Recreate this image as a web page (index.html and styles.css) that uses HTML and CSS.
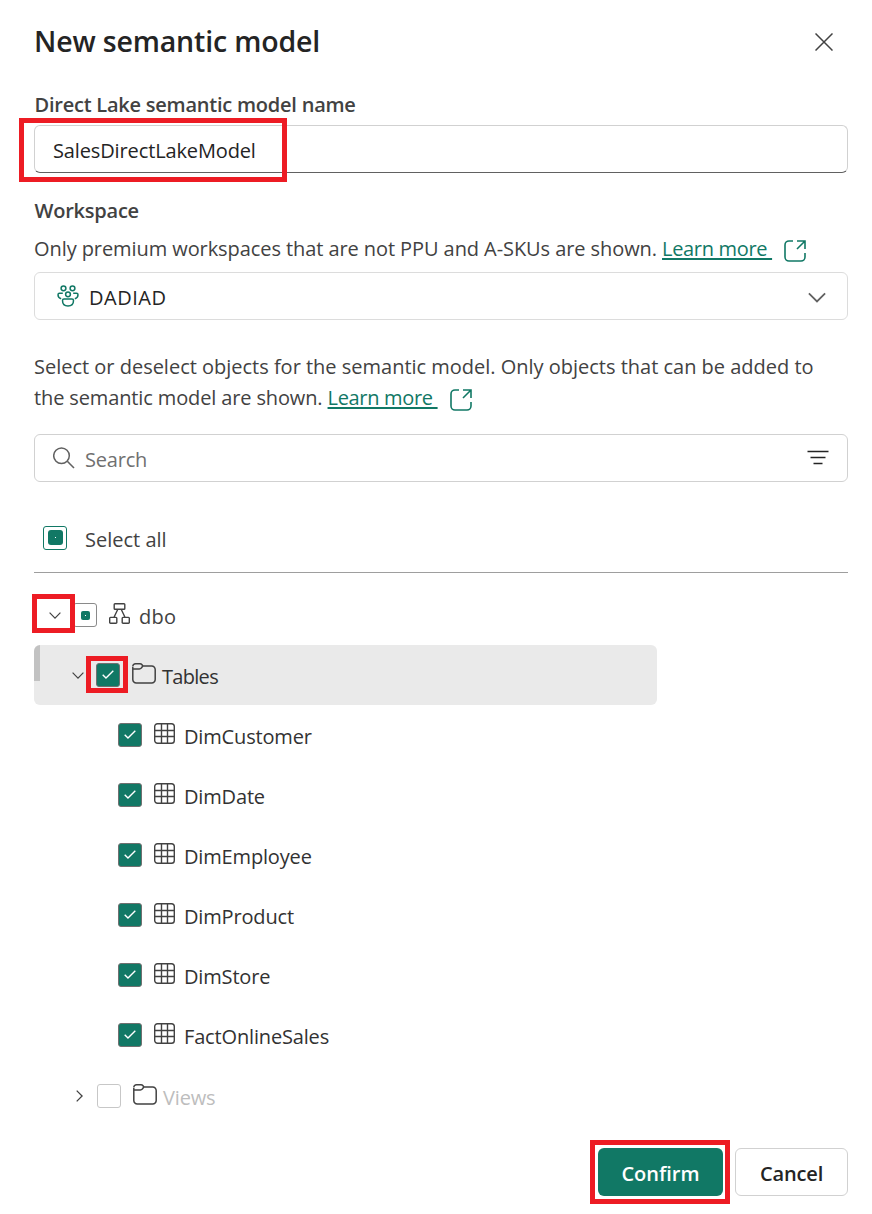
FILE: index.html
```
<!DOCTYPE html>
<html lang="en">
<head>
<meta charset="utf-8">
<title>New semantic model</title>
<link rel="stylesheet" href="styles.css">
</head>
<body>
<svg class="defs" aria-hidden="true">
  <symbol id="external" viewBox="0 0 22 22"><path d="M9 1H5a4 4 0 0 0-4 4v12a4 4 0 0 0 4 4h12a4 4 0 0 0 4-4v-4M13 1h8v8M21 1l-8 8" fill="none" stroke="currentColor" stroke-width="1.6"/></symbol>
  <symbol id="down" viewBox="0 0 12 7"><path d="M.6.7 6 6.100 11.400.7" fill="none" stroke="currentColor" stroke-width="1.2"/></symbol>
  <symbol id="right" viewBox="0 0 7 12"><path d="M.7.6 6.100 6 .7 11.400" fill="none" stroke="currentColor" stroke-width="1.3"/></symbol>
  <symbol id="check" viewBox="0 0 12 9"><path d="M.7 4.700 4 8 11.300.8" fill="none" stroke="currentColor" stroke-width="1.4"/></symbol>
  <symbol id="folder" viewBox="0 0 24 21"><path d="M.8 4v12.500a3.500 3.500 0 0 0 3.500 3.500h15.400a3.500 3.500 0 0 0 3.500-3.500V6.500A3.500 3.500 0 0 0 19.700 3H11.200M.8 3.500A2.700 2.700 0 0 1 3.500.8H8q1.200 0 2 1l.9 1.200-1.600 2q-.8.900-1.900.9H1" fill="none" stroke="currentColor" stroke-width="1.5"/></symbol>
  <symbol id="table" viewBox="0 0 21 21"><path d="M3.500.7h14a2.800 2.800 0 0 1 2.800 2.800v14a2.800 2.800 0 0 1-2.800 2.800h-14A2.800 2.800 0 0 1 .7 17.500v-14A2.800 2.800 0 0 1 3.500.7zM7.500.7v19.600M13.500.7v19.600M.7 7.500h19.600M.7 13.500h19.600" fill="none" stroke="currentColor" stroke-width="1.4"/></symbol>
</svg>

<main class="dialog">
  <header class="header">
    <h1 class="title">New semantic model</h1>
    <svg class="close" viewBox="0 0 18 18"><path d="M.5.5l17 17M17.500.5l-17 17" stroke="currentColor" stroke-width="1.5"/></svg>
  </header>

  <div class="label">Direct Lake semantic model name</div>
  <div class="field field-name"><span class="value-name">SalesDirectLakeModel</span><i class="mark mark-name"></i></div>

  <div class="label label-workspace">Workspace</div>
  <p class="hint">Only premium workspaces that are not PPU and A-SKUs are shown. <a class="link">Learn more&nbsp;</a><svg class="external"><use href="#external"/></svg></p>
  <div class="field field-workspace">
    <svg class="people" viewBox="0 0 22 22"><g fill="none" stroke="currentColor" stroke-width="1.5"><circle cx="6.500" cy="3.300" r="2.400"/><circle cx="15.500" cy="3.300" r="2.400"/><circle cx="11" cy="9.300" r="2.400"/><path d="M5.800 8.300H2.500Q1 8.300 1 9.800q0 3.200 3.200 4M16.200 8.300h3.300q1.500 0 1.500 1.500 0 3.200-3.200 4M7 14h8q1.500 0 1.500 1.500 0 5.500-5.500 5.500t-5.500-5.500Q5.500 14 7 14z"/></g></svg>
    <span class="value-workspace">DADIAD</span>
    <svg class="caret"><use href="#down"/></svg>
  </div>

  <p class="hint hint-objects"><span class="first-line">Select or deselect objects for the semantic model. Only objects that can be added to</span><br><span class="second-line">the semantic model are shown. </span><a class="link">Learn more&nbsp;</a><svg class="external"><use href="#external"/></svg></p>

  <div class="field field-search">
    <svg class="magnifier" viewBox="0 0 22 22"><path d="M14.300 14.300 21 21" stroke="currentColor" stroke-width="1.600"/><circle cx="8.500" cy="8.800" r="7.800" fill="none" stroke="currentColor" stroke-width="1.500"/></svg>
    <span class="placeholder">Search</span>
    <svg class="filter" viewBox="0 0 22 15"><path d="M.5 1.500h21M3.500 7.500h15M6.500 13.500h9" stroke="currentColor" stroke-width="1.500"/></svg>
  </div>

  <div class="select-all">
    <span class="box box-mixed"><i class="dot dot-large"></i></span>
    <span class="row-text">Select all</span>
  </div>

  <div class="tree">
    <div class="row row-root">
      <svg class="chevron"><use href="#down"/></svg>
      <span class="box box-root"><i class="dot"></i></span>
      <svg class="schema" viewBox="0 0 21 21"><path d="M6 .7h9a.8.8 0 0 1 .8.8v4a.8.8 0 0 1-.8.8H6a.8.8 0 0 1-.8-.8v-4A.8.8 0 0 1 6 .7zM1.500 14.400H7a.8.8 0 0 1 .8.8v4.300a.8.8 0 0 1-.8.8H1.500a.8.8 0 0 1-.8-.8v-4.300a.8.8 0 0 1 .8-.8zM14 14.400h5.500a.8.8 0 0 1 .8.8v4.300a.8.8 0 0 1-.8.8H14a.8.8 0 0 1-.8-.8v-4.300a.8.8 0 0 1 .8-.8zM8.700 6.500l-3.700 7.800M12.300 6.500l3.700 7.800" fill="none" stroke="currentColor" stroke-width="1.400"/></svg>
      <span class="row-text text-root">dbo</span>
      <i class="mark mark-expand"></i>
    </div>
    <div class="row row-tables">
      <svg class="chevron"><use href="#down"/></svg>
      <span class="box box-checked"><svg class="check"><use href="#check"/></svg><i class="mark mark-check"></i></span>
      <svg class="folder"><use href="#folder"/></svg>
      <span class="row-text text-tables">Tables</span>
    </div>
    <div class="row row-leaf"><span class="box box-checked"><svg class="check"><use href="#check"/></svg></span><svg class="table"><use href="#table"/></svg><span class="row-text">DimCustomer</span></div>
    <div class="row row-leaf"><span class="box box-checked"><svg class="check"><use href="#check"/></svg></span><svg class="table"><use href="#table"/></svg><span class="row-text">DimDate</span></div>
    <div class="row row-leaf"><span class="box box-checked"><svg class="check"><use href="#check"/></svg></span><svg class="table"><use href="#table"/></svg><span class="row-text">DimEmployee</span></div>
    <div class="row row-leaf"><span class="box box-checked"><svg class="check"><use href="#check"/></svg></span><svg class="table"><use href="#table"/></svg><span class="row-text">DimProduct</span></div>
    <div class="row row-leaf"><span class="box box-checked"><svg class="check"><use href="#check"/></svg></span><svg class="table"><use href="#table"/></svg><span class="row-text">DimStore</span></div>
    <div class="row row-leaf"><span class="box box-checked"><svg class="check"><use href="#check"/></svg></span><svg class="table"><use href="#table"/></svg><span class="row-text">FactOnlineSales</span></div>
    <div class="row row-views">
      <svg class="chevron-right"><use href="#right"/></svg>
      <span class="box box-empty"></span>
      <svg class="folder"><use href="#folder"/></svg>
      <span class="row-text text-views">Views</span>
    </div>
  </div>

  <footer class="footer">
    <div class="button button-primary">Confirm<i class="mark mark-confirm"></i></div>
    <div class="button button-cancel">Cancel</div>
  </footer>
</main>
</body>
</html>
```
FILE: styles.css
```
* { box-sizing: border-box; }
body {
  margin: 0;
  background: #fff;
  color: #424242;
  font: 400 20px/30px "Open Sans", "Noto Sans", sans-serif;
}
svg { display: block; flex: none; }
.defs { display: none; }
.dialog { padding: 23px 24px 0 34px; width: 872px; height: 1214px; overflow: hidden; }

.header { display: flex; align-items: center; justify-content: space-between; height: 36px; padding-right: 15px; }
.title { margin: 0; font-size: 28.500px; line-height: 36px; font-weight: 600; letter-spacing: -.16px; color: #242424; }
.close { width: 18px; height: 18px; margin-top: 2px; color: #424242; }

.label { margin-top: 31px; font-weight: 600; letter-spacing: -.23px; padding-left: .5px; }
.label-workspace { margin-top: 23px; }

.field {
  position: relative;
  display: flex;
  align-items: center;
  height: 48px;
  border: 1px solid #d1d1d1;
  border-radius: 6px;
}
.field-name { margin-top: 5px; padding: 3px 18px 0; border-bottom-color: #616161; color: #242424; }
.value-name { letter-spacing: -.13px; }
.field-workspace { margin-top: 8px; padding: 0 21px 0 22px; border-color: #dcdcdc; color: #242424; }
.field-search { margin-top: 21px; padding: 0 18px; }

.hint { height: 30px; margin: 8px 0 0; letter-spacing: -.08px; white-space: nowrap; }
.hint-objects { height: 62px; margin-top: 31px; line-height: 31px; }
.first-line { letter-spacing: -.01px; }
.second-line { letter-spacing: -.13px; }
.link {
  color: #117865;
  letter-spacing: -.32px;
  text-decoration: underline;
  text-decoration-thickness: 2px;
  text-underline-offset: 2px;
  text-decoration-skip-ink: none;
}
.external { display: inline-block; width: 22px; height: 22px; margin-left: 12px; vertical-align: -6px; color: #117865; }

.people { width: 22px; height: 22px; color: #117865; }
.value-workspace { margin: 3px auto 0 10px; letter-spacing: .5px; }
.caret { width: 18px; height: 11px; margin-top: 2px; color: #616161; }
.magnifier { width: 22px; height: 22px; color: #616161; }
.placeholder { margin: 3px auto 0 10px; color: #707070; letter-spacing: -.2px; }
.filter { width: 22px; height: 15px; margin-top: -1px; color: #242424; }

.select-all {
  display: flex;
  align-items: center;
  height: 91px;
  padding: 21px 9px 0;
  border-bottom: 1px solid #9e9e9e;
}
.select-all .row-text { margin: 4px 0 0 18px; }

.box {
  position: relative;
  display: flex;
  align-items: center;
  justify-content: center;
  flex: none;
  width: 24px;
  height: 24px;
  border: 1px solid #8a8a8a;
  border-radius: 3px;
  background: #fff;
}
.box-mixed { border-color: #117865; }
.box-checked { background: #117865; border-color: #707070; }
.box-empty { border-color: #c7c7c7; }
.dot { width: 9px; height: 9px; border-radius: 2px; background: radial-gradient(circle, #fff 0 .7px, #117865 .8px); }
.dot-large { width: 15px; height: 15px; border-radius: 3px; margin: -1px -1px 0 0; }
.check { width: 12px; height: 9px; margin-top: -1px; color: #fff; }

.tree { padding-top: 12px; }
.row { position: relative; display: flex; align-items: center; height: 60px; }
.row-text { margin-top: 3px; }
.row-root { padding-left: 15px; }
.box-root { margin-left: 12px; }
.schema { width: 21px; height: 21px; margin: -3px 0 0 12px; }
.text-root { margin-left: 9px; letter-spacing: .3px; }
.chevron { width: 12px; height: 7px; }

.row-tables {
  width: 623px;
  padding-left: 38px;
  border-radius: 6px;
  background: linear-gradient(#c2c2c2, #c2c2c2) 0 0 / 6px 36px no-repeat #eaeaea;
}
.row-tables .box { margin-left: 12px; }
.folder { width: 24px; height: 21px; margin: -3px 0 0 12px; }
.text-tables { margin-left: 6px; letter-spacing: -.7px; color: #323232; }

.row-leaf { padding-left: 84px; color: #323232; letter-spacing: -.16px; }
.table { width: 21px; height: 21px; margin: -3px 9px 0 12px; color: #424242; }

.row-views { height: 62px; padding-left: 42px; }
.chevron-right { width: 7px; height: 12px; }
.row-views .box { margin-left: 14px; }
.text-views { margin-left: 6px; color: #bdbdbd; letter-spacing: -.15px; }

.footer { display: flex; justify-content: flex-end; gap: 12px; margin-top: 21px; }
.button {
  position: relative;
  display: flex;
  align-items: center;
  justify-content: center;
  height: 48px;
  padding-top: 3px;
  border-radius: 6px;
  font-weight: 600;
}
.button-primary { width: 125px; background: #117865; color: #fff; }
.button-cancel { width: 113px; border: 1px solid #d1d1d1; color: #242424; letter-spacing: -.15px; }

.mark { position: absolute; border: 5px solid #ed1c24; }
.mark-name { left: -16px; top: -8px; width: 268px; height: 64px; }
.mark-expand { left: -2px; top: 9px; width: 43px; height: 39px; }
.mark-check { left: -11px; top: -8px; width: 42px; height: 37px; }
.mark-confirm { left: -8px; top: -8px; width: 140px; height: 64px; }
```
